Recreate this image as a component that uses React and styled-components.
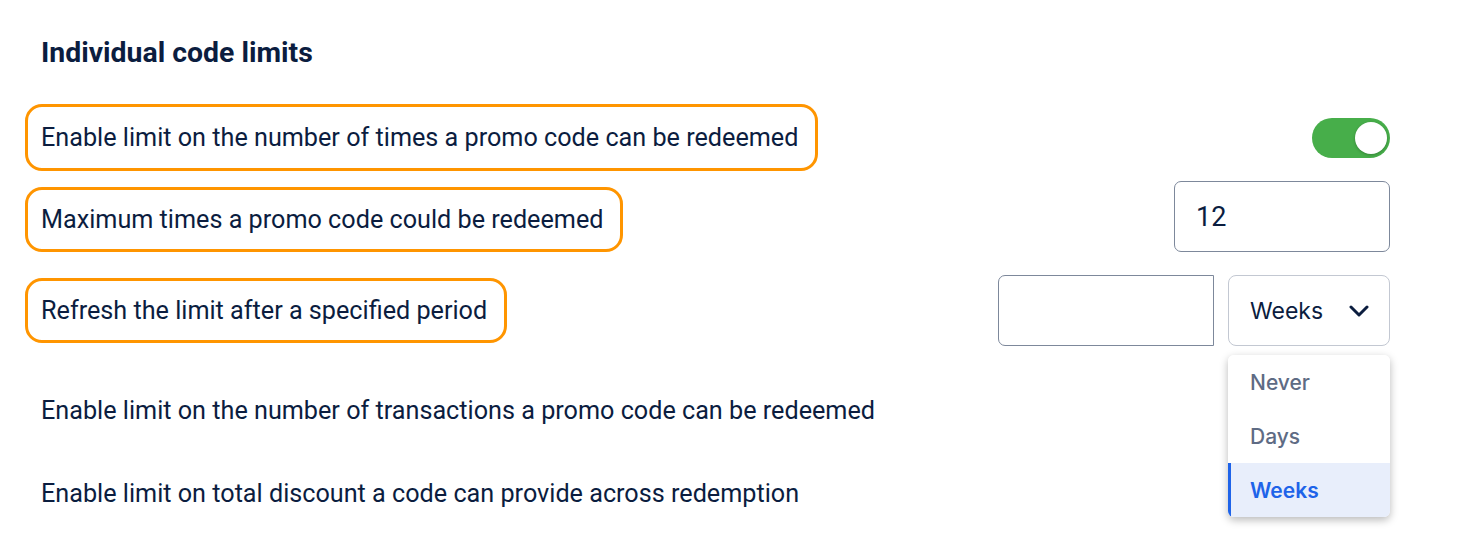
import styled, { createGlobalStyle } from 'styled-components';

const GlobalStyle = createGlobalStyle`
  body {
    margin: 0;
    background: #ffffff;
    font-family: Roboto, "Liberation Sans", sans-serif;
    color: #0b1d3f;
  }
`;

const Page = styled.div`
  width: 1460px;
  height: 556px;
  box-sizing: border-box;
  padding: 36px 70px 0 25px;
  overflow: hidden;
`;

const Heading = styled.h2`
  margin: 0 0 0 16px;
  font-size: 28.4px;
  font-weight: 700;
  line-height: 34px;
  color: #0b1d3f;
`;

const Row = styled.div`
  display: flex;
  align-items: ${p => p.$align || 'center'};
  justify-content: space-between;
  height: ${p => p.$height || 72}px;
  margin-top: ${p => p.$top || 0}px;
`;

const Label = styled.div`
  box-sizing: border-box;
  display: flex;
  align-items: center;
  height: ${p => p.$boxHeight || 67}px;
  padding: 0 17px 0 13px;
  border: 3px solid ${p => (p.$highlight ? '#ff9500' : 'transparent')};
  border-radius: 17px;
  font-size: 25.2px;
  color: #0b1d3f;
`;

const Controls = styled.div`
  display: flex;
  align-items: center;
  gap: 14px;
`;

const Toggle = styled.div`
  position: relative;
  width: 78px;
  height: 40px;
  border-radius: 20px;
  background: #47ae4a;
`;

const Knob = styled.div`
  position: absolute;
  top: 4px;
  right: 3px;
  width: 32px;
  height: 32px;
  border-radius: 50%;
  background: #fff;
  box-shadow: 0 1px 3px rgba(0, 0, 0, 0.25);
`;

const TextBox = styled.div`
  box-sizing: border-box;
  display: flex;
  align-items: center;
  width: 216px;
  height: 71px;
  padding: 0 21px;
  border: 1px solid #7d889b;
  border-radius: ${p => (p.$squareRight ? '7px 0 0 7px' : '7px')};
  font-size: 27px;
  color: #0b1d3f;
`;

const SelectWrap = styled.div`
  position: relative;
`;

const SelectBox = styled.div`
  box-sizing: border-box;
  display: flex;
  align-items: center;
  justify-content: space-between;
  width: 162px;
  height: 71px;
  padding: 0 20px 0 21px;
  border: 1px solid #c3c8d2;
  border-radius: 8px;
  font-family: Inter, Roboto, sans-serif;
  font-size: 23px;
  color: #0b1d3f;
`;

const Menu = styled.ul`
  position: absolute;
  top: 80px;
  left: 0;
  width: 162px;
  margin: 0;
  padding: 0;
  list-style: none;
  background: #fff;
  border-radius: 6px;
  box-shadow: 0 3px 8px rgba(0, 0, 0, 0.28);
  overflow: hidden;
`;

const MenuItem = styled.li`
  box-sizing: border-box;
  display: flex;
  align-items: center;
  height: 54px;
  padding-left: 19px;
  font-family: Inter, Roboto, sans-serif;
  font-size: 21px;
  font-weight: ${p => (p.$active ? 600 : 500)};
  color: ${p => (p.$active ? '#1e63e9' : '#5e6b84')};
  background: ${p => (p.$active ? '#e8eefb' : '#fff')};
  border-left: 3px solid ${p => (p.$active ? '#1e63e9' : 'transparent')};
`;

function Chevron() {
  return (
    <svg width="20" height="12" viewBox="0 0 20 12" fill="none">
      <path d="M2 2l8 8 8-8" stroke="#0b1d3f" strokeWidth="3" strokeLinecap="round" strokeLinejoin="round" />
    </svg>
  );
}

export default function App() {
  return (
    <Page>
      <GlobalStyle />
      <Heading>Individual code limits</Heading>

      <Row $top={34} $height={67}>
        <Label $highlight>Enable limit on the number of times a promo code can be redeemed</Label>
        <Toggle><Knob /></Toggle>
      </Row>

      <Row $top={10} $height={71} $align="flex-end">
        <Label $highlight $boxHeight={65}>Maximum times a promo code could be redeemed</Label>
        <TextBox>12</TextBox>
      </Row>

      <Row $top={23} $height={71}>
        <Label $highlight $boxHeight={65}>Refresh the limit after a specified period</Label>
        <Controls>
          <TextBox $squareRight />
          <SelectWrap>
            <SelectBox>
              Weeks
              <Chevron />
            </SelectBox>
            <Menu>
              <MenuItem>Never</MenuItem>
              <MenuItem>Days</MenuItem>
              <MenuItem $active>Weeks</MenuItem>
            </Menu>
          </SelectWrap>
        </Controls>
      </Row>

      <Row $top={32} $height={65}>
        <Label>Enable limit on the number of transactions a promo code can be redeemed</Label>
      </Row>

      <Row $top={18} $height={65}>
        <Label>Enable limit on total discount a code can provide across redemption</Label>
      </Row>
    </Page>
  );
}
